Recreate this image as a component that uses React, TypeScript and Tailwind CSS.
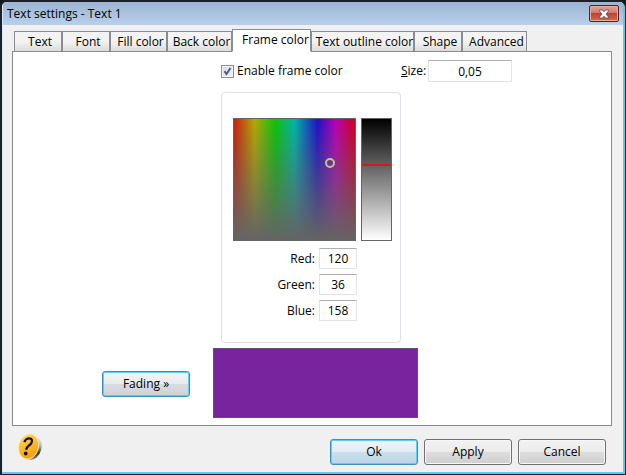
import { useState } from "react";
import clsx from "clsx";

const TABS = [
  { name: "Text", width: "w-12" },
  { name: "Font", width: "w-12" },
  { name: "Fill color", width: "w-[57px]" },
  { name: "Back color", width: "w-[65px]" },
  { name: "Frame color", width: "w-[79px]" },
  { name: "Text outline color", width: "w-[103px]" },
  { name: "Shape", width: "w-12" },
  { name: "Advanced", width: "w-[65px]" },
];

const BUTTON =
  "h-[26px] w-[88px] rounded-[3px] border text-center leading-4";
const BUTTON_BLUE =
  "border-[#3c8fb8] shadow-[inset_0_0_0_1px_#5cd0f2]";
const FIELD =
  "rounded-[1px] border border-[#e2e3ea] border-t-[#abadb3] bg-white text-center outline-none";

function TitleBar() {
  return (
    <header className="flex h-[23px] items-start justify-between bg-linear-to-b from-[#9ab4d2] to-[#b9d0ea] px-1">
      <h1 className="pt-1 leading-4">Text settings - Text 1</h1>
      <button
        type="button"
        aria-label="Close"
        className="mt-[3px] flex h-[17px] w-[30px] items-center justify-center rounded-[2px] border border-[#54222a] bg-[linear-gradient(#e0a79c,#d27868_45%,#bd4330_50%,#cf6f52)] shadow-[inset_0_0_0_1px_#e6aca0]"
      >
        <svg width="12" height="10" viewBox="0 0 12 10">
          <path
            d="M1.500 1h3L6 2.800 7.500 1h3v1L8 5l2.500 3v1h-3L6 7.200 4.500 9h-3V8L4 5 1.500 2z"
            fill="#fff"
            stroke="#5b4652"
            strokeWidth="0.8"
          />
        </svg>
      </button>
    </header>
  );
}

function HelpIcon() {
  return (
    <svg width="26" height="28" viewBox="0 0 26 28">
      <defs>
        <linearGradient id="coin" x1="0" y1="0" x2="0.7" y2="1">
          <stop offset="0" stopColor="#ffe183" />
          <stop offset="0.45" stopColor="#fdbf38" />
          <stop offset="1" stopColor="#f99d08" />
        </linearGradient>
        <linearGradient id="edge" x1="0" y1="0" x2="0" y2="1">
          <stop offset="0" stopColor="#f4f4f4" />
          <stop offset="0.35" stopColor="#b5b5b5" />
          <stop offset="0.65" stopColor="#3a3a3a" />
          <stop offset="1" stopColor="#999" />
        </linearGradient>
      </defs>
      <ellipse cx="15" cy="14.500" rx="9.500" ry="12.500" transform="rotate(14 15 14.500)" fill="url(#edge)" />
      <ellipse cx="11.500" cy="13.500" rx="10" ry="12.800" transform="rotate(14 11.500 13.500)" fill="url(#coin)" stroke="#fff0bd" strokeWidth="0.8" />
      <path
        d="M7.300 9.200C8.200 6.600 10 5.300 12.200 5.300c2.700 0 3.400 2.200 2.200 4.600-1.300 2.600-4.700 3.300-5.300 6.900"
        fill="none"
        stroke="#17120a"
        strokeWidth="2.3"
      />
      <circle cx="8.700" cy="20.500" r="1.900" fill="#17120a" />
    </svg>
  );
}

export default function App() {
  const [tab, setTab] = useState("Frame color");
  const [enabled, setEnabled] = useState(true);
  const [size, setSize] = useState("0,05");
  const [brightness, setBrightness] = useState(38);
  const [color, setColor] = useState({ Red: "120", Green: "36", Blue: "158" });

  return (
    <div className="bg-[#111820] font-['Open_Sans','Noto_Sans',sans-serif] text-[12px] text-black">
      <div className="flex min-h-screen flex-col overflow-hidden rounded-t-[7px] border-2 border-r border-b border-[#1b2029] bg-[#5ccbe8] pb-0.5">
        <div className="mr-0.5 flex grow flex-col border-l border-[#d5e8f5] bg-[#f0f0f0]">
          <TitleBar />

          <div className="flex grow flex-col pt-1 pr-[11px] pl-[9px]">
            <div role="tablist" className="z-10 -mb-px flex h-[23px] items-end pl-0.5">
              {TABS.map((t) => (
                <button
                  key={t.name}
                  type="button"
                  role="tab"
                  aria-selected={t.name === tab}
                  onClick={() => setTab(t.name)}
                  className={clsx(
                    "flex shrink-0 justify-center border border-[#8a8c93] pl-1 leading-4 whitespace-nowrap",
                    t.width,
                    t.name === tab
                      ? "h-[23px] border-b-white bg-white pt-0.5 pl-2"
                      : "h-[21px] bg-linear-to-b from-[#f3f3f3] from-50% to-[#dcdcdc] pt-0.5"
                  )}
                >
                  {t.name}
                </button>
              ))}
            </div>

            <main className="grid grow grid-cols-[200px_1fr] border border-[#868990] bg-white pt-2 pb-[7px]">
              <div className="flex items-end justify-end pr-[23px] pb-[21px]">
                <button
                  type="button"
                  className={clsx(BUTTON, BUTTON_BLUE, "bg-[linear-gradient(#f3f4f5,#e8eaec_50%,#d9dcdf_50%,#ced2d6)]")}
                >
                  Fading »
                </button>
              </div>

              <div className="flex flex-col">
                <div className="flex items-center pl-2">
                  <label className="flex w-[180px] items-center gap-[3px]">
                    <span className="relative flex">
                      <input
                        type="checkbox"
                        checked={enabled}
                        onChange={(e) => setEnabled(e.target.checked)}
                        className="size-[13px] appearance-none border border-[#8e8f8f] bg-linear-to-br from-[#d3d7dd] to-[#f6f6f6] shadow-[inset_0_0_0_1px_#f4f4f4]"
                      />
                      {enabled && (
                        <svg className="pointer-events-none absolute inset-0" width="13" height="13" viewBox="0 0 13 13">
                          <path d="M3.500 6.200 5.500 9 9.500 3" fill="none" stroke="#4a5f97" strokeWidth="2" />
                        </svg>
                      )}
                    </span>
                    Enable frame color
                  </label>
                  <label htmlFor="size" className="w-[27px]">
                    <span className="underline">S</span>ize:
                  </label>
                  <input
                    id="size"
                    value={size}
                    onChange={(e) => setSize(e.target.value)}
                    className={clsx(FIELD, "h-[22px] w-[84px]")}
                  />
                </div>

                <section className="mt-[10px] ml-2 w-[180px] rounded-[4px] border border-[#dcdfe4] pt-[25px] pb-[21px] pl-[11px]">
                  <div className="flex gap-[5px]">
                    <div className="relative size-[123px] border border-[#646464]">
                      <div className="absolute inset-0 bg-[linear-gradient(to_bottom,transparent,#646464),linear-gradient(to_right,#cd1c10,#b4a800_17%,#0ac40a_34%,#00b4a8_50%,#2010c8_69%,#b800b4_84%,#cd0020)]" />
                      <span className="absolute top-[39px] left-[91px] size-2.5 rounded-full border-2 border-[#a5d87c]" />
                    </div>
                    <input
                      type="range"
                      aria-label="Brightness"
                      value={brightness}
                      onChange={(e) => setBrightness(Number(e.target.value))}
                      className="h-[123px] w-[31px] appearance-none border border-[#646464] bg-[linear-gradient(#000,#fff)] [writing-mode:vertical-lr] [&::-webkit-slider-thumb]:h-0.5 [&::-webkit-slider-thumb]:w-[29px] [&::-webkit-slider-thumb]:appearance-none [&::-webkit-slider-thumb]:bg-[#e01414]"
                    />
                  </div>
                  <div className="mt-[7px] flex w-[124px] flex-col gap-[5px]">
                    {(["Red", "Green", "Blue"] as const).map((c) => (
                      <label key={c} className="flex items-center justify-end gap-1">
                        {c}:
                        <input
                          value={color[c]}
                          onChange={(e) => setColor({ ...color, [c]: e.target.value })}
                          className={clsx(FIELD, "h-[21px] w-[38px]")}
                        />
                      </label>
                    ))}
                  </div>
                </section>

                <div
                  className="mt-[5px] h-[70px] w-[205px] border border-[#5f5068]"
                  style={{ backgroundColor: `rgb(${color.Red}, ${color.Green}, ${color.Blue})` }}
                />
              </div>
            </main>
          </div>

          <footer className="flex h-[46px] items-start justify-between pr-[17px] pl-3.5">
            <button type="button" aria-label="Help" className="mt-[7px]">
              <HelpIcon />
            </button>
            <div className="flex gap-1.5 pt-[13px]">
              <button
                type="button"
                className={clsx(BUTTON, BUTTON_BLUE, "bg-[linear-gradient(#edf6fa,#dfedf4_50%,#cbdfeb_50%,#bdd4e2)]")}
              >
                Ok
              </button>
              {["Apply", "Cancel"].map((b) => (
                <button
                  key={b}
                  type="button"
                  className={clsx(BUTTON, "border-[#707070] bg-[linear-gradient(#f2f2f2,#ebebeb_50%,#dddddd_50%,#cfcfcf)] shadow-[inset_0_0_0_1px_#f7f7f7]")}
                >
                  {b}
                </button>
              ))}
            </div>
          </footer>
        </div>
      </div>
    </div>
  );
}
